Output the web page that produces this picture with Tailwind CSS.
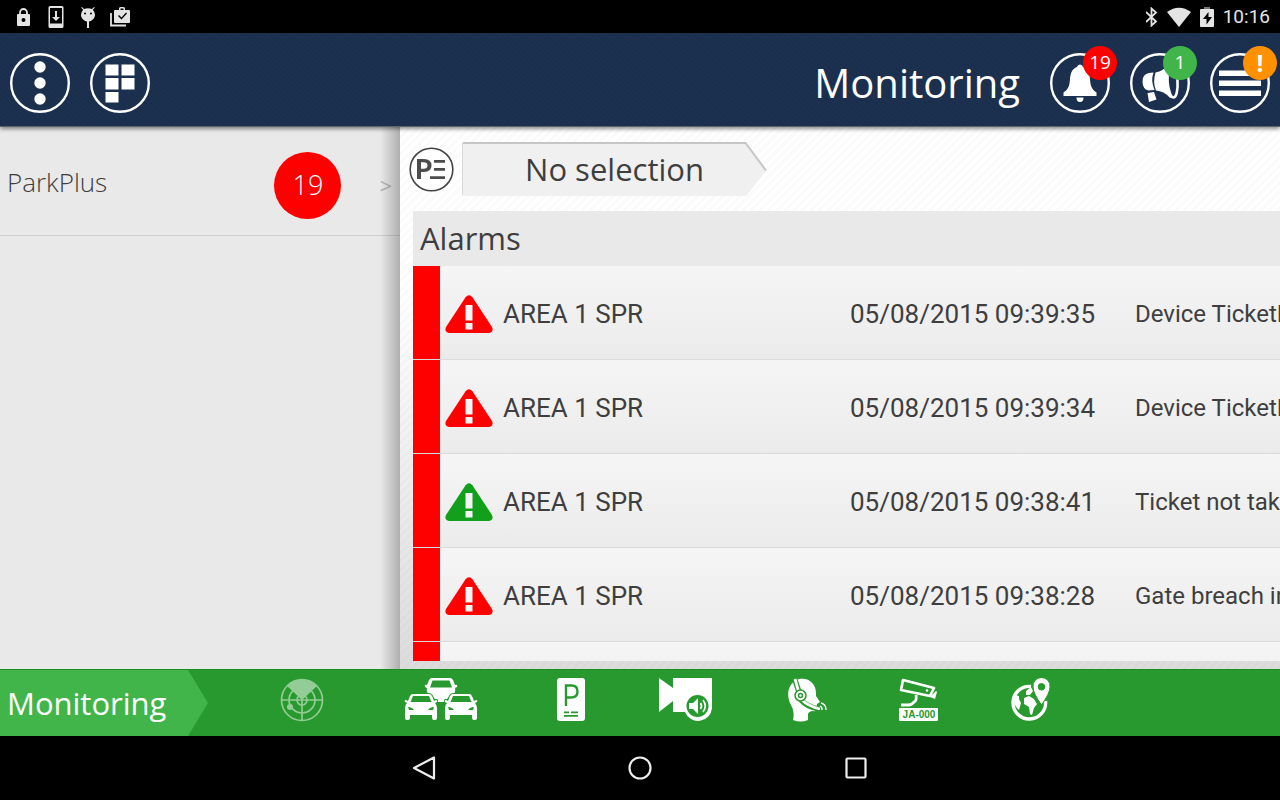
<!DOCTYPE html>
<html lang="en">
  <head>
    <meta charset="UTF-8" />
    <meta name="viewport" content="width=device-width, initial-scale=1.0" />
    <title>ParkPlus - Monitoring</title>
    <script src="https://cdn.jsdelivr.net/npm/@tailwindcss/browser@4"></script>
  </head>
  <body class="flex flex-col h-screen overflow-hidden bg-black text-[#3e3e3e] font-['Open_Sans',sans-serif]">
    <!-- Shared symbols -->
    <svg class="hidden">
      <symbol id="warning" viewBox="0 0 48 38">
        <path fill="currentColor" d="M20.600 2.200Q24-1.600 27.400 2.200L47 32Q49 37 44 38H4Q-1 37 1 32Z" />
        <path fill="#f4f4f4" d="M20.500 10h7v15.500h-7zM20.500 28h7v6.500h-7z" />
      </symbol>
      <symbol id="car" viewBox="0 0 34 28">
        <path fill="currentColor" fill-rule="evenodd" stroke="#28992e" stroke-width="2" paint-order="stroke" d="M9 1h16q2 0 3 2l2 5 2-1q2 0 1 2l-2 1q2 2 2 5v10q0 2-2 2h-1q-2 0-2-2v-3H6v3q0 2-2 2H3q-2 0-2-2V15q0-3 2-5l-2-1q-1-2 1-2l2 1 2-5q1-2 3-2ZM9 3 6.500 9h21L25 3ZM4 14l1 3h5q-2-3-6-3Zm26 0q-4 0-6 3h5Z" />
      </symbol>
    </svg>

    <!-- Status bar -->
    <div class="flex items-center justify-between h-[33px] shrink-0 pl-3 pr-[10px] text-[#e4e4e4] font-[Roboto,sans-serif]">
      <div class="flex items-center gap-3">
        <svg class="w-5 h-5" viewBox="0 0 20 20">
          <path d="M8 9V5.500a3.500 3.500 0 0 1 7 0V9" fill="none" stroke="currentColor" stroke-width="1.800" />
          <path fill="currentColor" fill-rule="evenodd" d="M6 7h11q1 0 1 1v10q0 1-1 1H6q-1 0-1-1V8q0-1 1-1Zm5.500 4a2 2 0 1 0 0 4 2 2 0 0 0 0-4Z" />
        </svg>
        <svg class="w-5 h-[22px]" viewBox="0 0 20 22">
          <path fill="currentColor" fill-rule="evenodd" d="M6 0h12q1.500 0 1.500 1.500v19q0 1.500-1.500 1.500H6q-1.500 0-1.500-1.500v-19Q4.500 0 6 0Zm0 2v15.500h12V2Z" />
          <path fill="currentColor" d="M11 5h2v6h3l-4 4-4-4h3Z" />
        </svg>
        <svg class="w-5 h-[22px]" viewBox="0 0 20 22">
          <path fill="currentColor" fill-rule="evenodd" d="M6 1l2 2q4-1.500 8 0l2-2 .8.800-2 2Q19 6 19 9c0 3-3 6-6 6.500V22h-2v-6.500C8 15 5 12 5 9q0-3 2.200-5.200l-2-2ZM9 6.500a1 1 0 1 0 0 2 1 1 0 0 0 0-2Zm6 0a1 1 0 1 0 0 2 1 1 0 0 0 0-2Z" />
        </svg>
        <svg class="w-5 h-5 ml-[2px]" viewBox="0 0 20 20">
          <path d="M1 6v12.500h15" fill="none" stroke="currentColor" stroke-width="1.800" />
          <path fill="currentColor" fill-rule="evenodd" d="M5 3h4V1.500Q9 0 10.500 0h3Q15 0 15 1.500V3h4q1 0 1 1v11q0 1-1 1H5q-1 0-1-1V4q0-1 1-1Zm5.500-1.500V3h3V1.500ZM8 9l3.500 3.500 5.500-6-1-1-4.500 5L9 8Z" />
        </svg>
      </div>
      <div class="flex items-center">
        <svg class="w-3 h-5 mr-2" viewBox="0 0 12 20" fill="none" stroke="currentColor" stroke-width="1.800">
          <path d="M0 5l10 9.500-4.500 4V1.500l4.500 4L0 15" />
        </svg>
        <svg class="w-[26px] h-5 mr-2" viewBox="0 0 26 20">
          <path fill="currentColor" d="M1 5Q13-3.500 25 5L13 20Z" />
        </svg>
        <svg class="w-[14px] h-5 mr-[9px]" viewBox="0 0 14 20">
          <path fill="#777" d="M4 0h6v3H4Z" />
          <path fill="currentColor" fill-rule="evenodd" d="M1 2h12q1 0 1 1v16q0 1-1 1H1q-1 0-1-1V3q0-1 1-1Zm7.500 3L3 12h3.500v5.500L12 10H8.500Z" />
        </svg>
        <span class="text-[19px] leading-6">10:16</span>
      </div>
    </div>

    <!-- Header -->
    <header class="relative z-20 flex items-center h-[94px] shrink-0 px-[10px] pt-[6px] gap-5 text-white border-b border-[#5d6470] shadow-[0_2px_4px_rgba(0,0,0,0.45)] bg-[#1a2f4d] bg-[repeating-linear-gradient(45deg,rgba(255,255,255,0.01)_0_2px,transparent_2px_4px)]">
      <button aria-label="More" class="w-[60px] h-[60px] shrink-0">
        <svg class="w-full h-full" viewBox="0 0 60 60">
          <circle cx="30" cy="30" r="28.800" fill="none" stroke="#fff" stroke-width="2.400" />
          <g fill="#fff"><circle cx="30" cy="14" r="5.700" /><circle cx="30" cy="30" r="5.700" /><circle cx="30" cy="46" r="5.700" /></g>
        </svg>
      </button>
      <button aria-label="Modules" class="w-[60px] h-[60px] shrink-0">
        <svg class="w-full h-full" viewBox="0 0 60 60">
          <circle cx="30" cy="30" r="28.800" fill="none" stroke="#fff" stroke-width="2.400" />
          <path fill="#fff" d="M15.500 11.500h13v11h-13zM31.500 11.500h13v11h-13zM15.500 25h13v11.500h-13zM31.500 25h13v11.500h-13zM15.500 39h13v10.500h-13z" />
        </svg>
      </button>
      <h1 class="ml-auto mr-[10px] text-[40px] leading-[48px]">Monitoring</h1>
      <button aria-label="Alarms" class="relative w-[60px] h-[60px] shrink-0">
        <svg class="w-full h-full" viewBox="0 0 60 60">
          <circle cx="30" cy="30" r="28.800" fill="none" stroke="#fff" stroke-width="2.400" />
          <path fill="#fff" d="M30 11.500q2.500 0 3 2.500c5 2 6.500 6 7 12 .5 7 1.500 10 6.500 13.500V43h-33v-3.500C18.500 36 19.500 33 20 26c.5-6 2-10 7-12q.5-2.500 3-2.500ZM26.500 44.500h7q0 4.500-3.500 4.500t-3.500-4.500Z" />
        </svg>
        <span class="absolute -top-[7px] -right-[7px] flex items-center justify-center w-[34px] h-[34px] rounded-full bg-[#ff0000] text-[19px]">19</span>
      </button>
      <button aria-label="Announcements" class="relative w-[60px] h-[60px] shrink-0">
        <svg class="w-full h-full" viewBox="0 0 60 60">
          <circle cx="30" cy="30" r="28.800" fill="none" stroke="#fff" stroke-width="2.400" />
          <path fill="#fff" d="M23.500 19.500q-3 8 1 17.500l-6 .5q-6-1.500-6-9t6.500-8.500ZM25.500 19.500q8-1.500 13-8l3-1q-7 16 1 35l-3-1q-5.500-6.500-13.500-7-3.500-8-.5-18Z" />
          <ellipse cx="42.500" cy="28" rx="5" ry="16.500" fill="none" stroke="#fff" stroke-width="2.600" transform="rotate(-4 42.500 28)" />
          <path fill="#fff" d="M17.500 40l6.500-1 2.500 7.500-7.500 2.500Z" />
        </svg>
        <span class="absolute -top-[7px] -right-[7px] flex items-center justify-center w-[34px] h-[34px] rounded-full bg-[#41b549] text-[19px]">1</span>
      </button>
      <button aria-label="Menu" class="relative w-[60px] h-[60px] shrink-0">
        <svg class="w-full h-full" viewBox="0 0 60 60">
          <circle cx="30" cy="30" r="28.800" fill="none" stroke="#fff" stroke-width="2.400" />
          <path fill="#fff" d="M9 17.500h42v5.500H9zM9 27.500h42V33H9zM9 37.500h42V43H9z" />
        </svg>
        <span class="absolute -top-[7px] -right-[7px] flex items-center justify-center w-[34px] h-[34px] rounded-full bg-[#ff9000] text-2xl font-bold">!</span>
      </button>
    </header>

    <main class="flex flex-1 min-h-0">
      <!-- Sites -->
      <aside class="relative w-[400px] shrink-0 bg-[#e9e9e9]">
        <a href="#" class="flex items-center h-[109px] pt-2 pl-[7px] pr-2 border-b border-[#cfcfcf]">
          <span class="text-[26px] leading-8 font-light pb-[6px]">ParkPlus</span>
          <span class="ml-auto mr-[38px] flex items-center justify-center w-[67px] h-[67px] rounded-full bg-[#ff0000] text-white text-[27px] font-light">19</span>
          <span class="text-[22px] text-[#b5b5b5]">&gt;</span>
        </a>
        <div class="absolute inset-y-0 right-0 w-5 bg-linear-to-r from-black/0 to-black/25"></div>
      </aside>

      <section class="flex flex-col flex-1 min-w-0 pl-[13px] pb-2 bg-white bg-[repeating-linear-gradient(135deg,rgba(0,0,0,0.015)_0_3px,transparent_3px_6px),linear-gradient(#fff_30%,#dcdcdc)]">
        <div class="flex items-center h-[84px] shrink-0 -ml-1 gap-2">
          <svg class="w-[45px] h-[45px] shrink-0" viewBox="0 0 45 45">
            <circle cx="22.500" cy="22.500" r="21.300" fill="#fff" stroke="#444" stroke-width="1.600" />
            <path fill="#4c4c4c" fill-rule="evenodd" d="M8 12h7q7.500 0 7.500 6.500T15 25h-3v7H8Zm4 3.300v6.400h2.500q4 0 4-3.200t-4-3.200ZM25 13h11v2.700H25zM25 21h11v2.700H25zM21 29.300h15V32H21z" />
          </svg>
          <button class="relative w-[305px] h-[54px]">
            <svg class="absolute inset-0 w-full h-full" viewBox="0 0 305 54">
              <path fill="#f0f0f0" d="M0 2q0-2 2-2h282l21 28-21 26H2q-2 0-2-2Z" />
              <path fill="none" stroke="#c6c6c6" stroke-width="2" d="M1 1h282.500L304 28.500" />
              <path fill="none" stroke="#dadada" d="M.500 1v52" />
            </svg>
            <span class="relative text-[31px]">No selection</span>
          </button>
        </div>

        <h2 class="h-[55px] shrink-0 pl-[7px] bg-[#e9e9e9] text-[31px] leading-[55px]">Alarms</h2>
        <div class="flex-1 min-h-0 overflow-hidden bg-[#f4f4f4]">
          <table class="table-fixed w-[1200px] border-separate border-spacing-0 font-[Roboto,sans-serif] text-[26px] leading-8 whitespace-nowrap [&_tr]:h-[94px] [&_tr]:bg-linear-to-b [&_tr]:from-[#f5f5f5] [&_tr]:to-[#ebebeb] [&_td]:p-0 [&_td]:pt-[2px] [&_td]:border-b [&_td]:border-[#dadada]">
            <colgroup>
              <col class="w-[27px]" />
              <col class="w-[63px]" />
              <col class="w-[347px]" />
              <col class="w-[285px]" />
              <col />
            </colgroup>
            <tbody>
              <tr>
                <td class="bg-[#ff0000]"></td>
                <td><svg class="w-12 h-[38px] ml-[5px] text-[#ff0000]"><use href="#warning" /></svg></td>
                <td>AREA 1 SPR</td>
                <td>05/08/2015 09:39:35</td>
                <td class="text-2xl">Device TicketDispenser</td>
              </tr>
              <tr>
                <td class="bg-[#ff0000]"></td>
                <td><svg class="w-12 h-[38px] ml-[5px] text-[#ff0000]"><use href="#warning" /></svg></td>
                <td>AREA 1 SPR</td>
                <td>05/08/2015 09:39:34</td>
                <td class="text-2xl">Device TicketDispenser</td>
              </tr>
              <tr>
                <td class="bg-[#ff0000]"></td>
                <td><svg class="w-12 h-[38px] ml-[5px] text-[#12a01c]"><use href="#warning" /></svg></td>
                <td>AREA 1 SPR</td>
                <td>05/08/2015 09:38:41</td>
                <td class="text-2xl">Ticket not taken</td>
              </tr>
              <tr>
                <td class="bg-[#ff0000]"></td>
                <td><svg class="w-12 h-[38px] ml-[5px] text-[#ff0000]"><use href="#warning" /></svg></td>
                <td>AREA 1 SPR</td>
                <td>05/08/2015 09:38:28</td>
                <td class="text-2xl">Gate breach in</td>
              </tr>
              <tr>
                <td class="bg-[#ff0000]"></td>
                <td colspan="4"></td>
              </tr>
            </tbody>
          </table>
        </div>
      </section>
    </main>

    <!-- Module bar -->
    <footer class="flex h-[67px] shrink-0 bg-[#28992e] border-t border-[#1d8a22] text-white">
      <div class="w-[208px] shrink-0 pl-[7px] bg-[#41b549] text-[31px] leading-[66px] [clip-path:polygon(0_0,188px_0,100%_50%,188px_100%,0_100%)]">Monitoring</div>
      <nav class="flex items-start pt-2 pl-[72px]">
        <button aria-label="Radar" class="w-11 mr-20">
          <svg class="w-11 h-11 text-[#93cc96]" viewBox="0 0 44 44" fill="none" stroke="currentColor" stroke-width="1.700">
            <circle cx="22" cy="22" r="20.500" /><circle cx="22" cy="22" r="13" /><circle cx="22" cy="22" r="5" />
            <path d="M1 22h42M22 17v26" />
            <path fill="currentColor" stroke="none" d="M22 22 7 8Q21-5 37 8Z" /><circle cx="10" cy="29" r="3" fill="currentColor" stroke="none" />
          </svg>
        </button>
        <button aria-label="Cars" class="w-[74px] mr-[79px]">
          <svg class="w-[74px] h-11" viewBox="0 0 74 44">
            <path fill="#fff" fill-rule="evenodd" d="M28 0h18q2 0 3 2l2 5q3-1 2 2l-2 1q1 4-2 7-4 1-6 4l-3 3h-6l-3-3q-2-3-6-4-3-3-2-7l-2-1q-1-3 2-2l2-5q1-2 3-2Zm.500 2.500L26 9.500h22l-2.500-7Z" />
            <svg x="0" y="15" width="34" height="28"><use href="#car" /></svg>
            <svg x="40" y="15" width="34" height="28"><use href="#car" /></svg>
          </svg>
        </button>
        <button aria-label="Parking" class="w-7 mr-[74px]">
          <svg class="w-7 h-11" viewBox="0 0 28 44">
            <rect width="28" height="43" rx="3" fill="#fff" />
            <path d="M9 28V7.500h5.500q6 0 6 6t-6.500 6H9" fill="none" stroke="#28992e" stroke-width="2.400" />
            <path fill="#28992e" d="M7 33.500h5v1.800H7zM14 33.500h7v1.800h-7zM7 37h14v1.800H7z" />
          </svg>
        </button>
        <button aria-label="Video intercom" class="w-[54px] mr-[75px]">
          <svg class="w-[54px] h-11" viewBox="0 0 54 44">
            <path fill="#fff" d="M0 0l14 10V0h39v30a14 14 0 0 1-27 4H14V23L0 34Z" />
            <circle cx="38.500" cy="28" r="11" fill="#28992e" />
            <path fill="#fff" d="M30 25h4l5-5v16l-5-5h-4Z" />
            <path d="M41.500 25q2 3 0 6M44 22q4.500 6 0 12" fill="none" stroke="#fff" stroke-width="1.700" />
          </svg>
        </button>
        <button aria-label="Operator" class="w-10 mr-[71px]">
          <svg class="w-10 h-11" viewBox="0 0 40 44">
            <path fill="#fff" d="M5 42q2-9-2-15C-2 18-1 5 11 1c10-2 17 5 17 14v3l4 6-3 2v4q0 4-4 3-4 0-5 3v6q-7 3-15 0Z" />
            <path d="M7 2l4 12M13 22q6 7 18 9" fill="none" stroke="#28992e" stroke-width="5.500" />
            <path d="M7 1l4 14M14 22q6 6 18 9" fill="none" stroke="#fff" stroke-width="2.800" />
            <circle cx="12.500" cy="17.500" r="5.500" fill="#fff" stroke="#28992e" stroke-width="1.500" />
            <circle cx="12.500" cy="17.500" r="2" fill="none" stroke="#28992e" stroke-width="1.500" />
            <path d="M32 28q2.500 1 2 4M33 25q5 1 5 7" fill="none" stroke="#fff" stroke-width="1.300" />
          </svg>
        </button>
        <button aria-label="Plate camera" class="w-10 mr-[72px]">
          <svg class="w-10 h-11" viewBox="0 0 40 44">
            <path d="M4 2l31 8-4 8L2 12Z" fill="none" stroke="#fff" stroke-width="2.600" stroke-linejoin="round" />
            <path d="M37 13l1 1-2 7-5-2Z" fill="#fff" /><circle cx="28" cy="12.500" r="1.300" fill="#fff" />
            <path d="M17 17q1 6-2 7-2 3-6 3H2" fill="none" stroke="#fff" stroke-width="2.800" />
            <rect x="0" y="30" width="39" height="13" rx="1" fill="#fff" />
            <text x="20" y="40" text-anchor="middle" class="fill-[#28992e] text-[10px] font-bold font-['Liberation_Sans',sans-serif]">JA-000</text>
          </svg>
        </button>
        <button aria-label="Map" class="w-10">
          <svg class="w-10 h-11" viewBox="0 0 40 44">
            <path d="M20 8.500A16.300 16.300 0 1 0 34.500 23" fill="none" stroke="#fff" stroke-width="3.400" />
            <path fill="#fff" d="M4 18q5-2 4 3l2 4-2 7q-5-4-5-10ZM15 13l5-4 2 4-3 4h-4ZM13 20l5-2 5 3 3 5-3 4-2 7-2-1-1-7-5-3Z" />
            <path fill="#fff" fill-rule="evenodd" stroke="#28992e" stroke-width="1" d="M30.500-.5A8.500 8.500 0 0 1 39 9q0 6-8.500 18Q22 15 22 9a8.500 8.500 0 0 1 8.500-9.500Zm0 6a3.300 3.300 0 1 0 0 6.600 3.300 3.300 0 0 0 0-6.600Z" />
          </svg>
        </button>
      </nav>
    </footer>

    <!-- Android navigation -->
    <div class="flex items-center justify-center gap-48 h-16 shrink-0">
      <button aria-label="Back">
        <svg class="w-6 h-6" viewBox="0 0 24 24"><path d="M22 1.500v21L2 12Z" fill="none" stroke="#eee" stroke-width="2.200" stroke-linejoin="round" /></svg>
      </button>
      <button aria-label="Home">
        <svg class="w-6 h-6" viewBox="0 0 24 24"><circle cx="12" cy="12" r="10.500" fill="none" stroke="#eee" stroke-width="2.200" /></svg>
      </button>
      <button aria-label="Recent apps">
        <svg class="w-6 h-6" viewBox="0 0 24 24"><rect x="2.500" y="2.500" width="19" height="19" rx="1" fill="none" stroke="#eee" stroke-width="2.200" /></svg>
      </button>
    </div>
  </body>
</html>
